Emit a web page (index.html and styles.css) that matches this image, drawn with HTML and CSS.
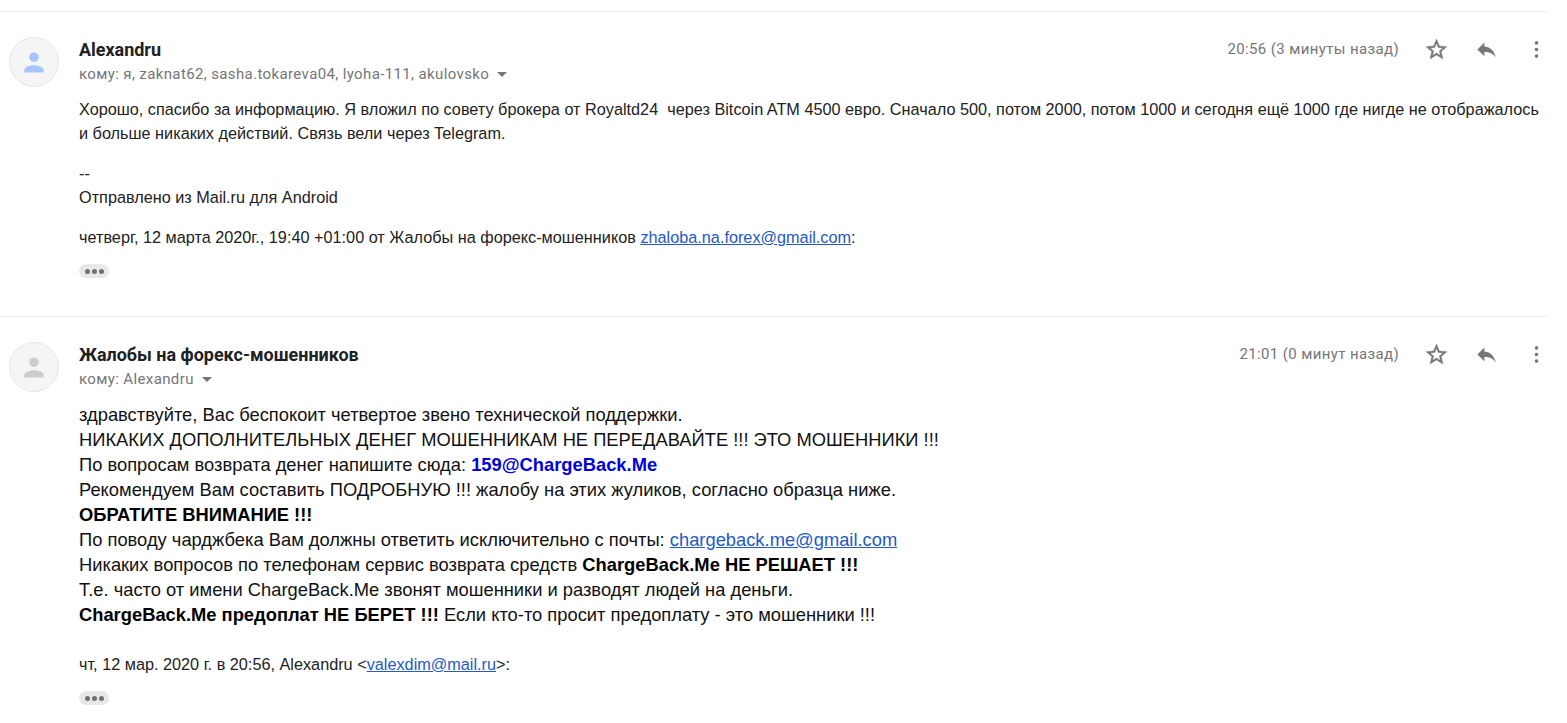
FILE: index.html
```
<!DOCTYPE html>
<html lang="ru">
<head>
<meta charset="utf-8">
<title>Переписка</title>
<link rel="stylesheet" href="styles.css">
</head>
<body>
<svg class="defs" width="0" height="0" aria-hidden="true">
  <symbol id="person" viewBox="0 0 50 50"><circle cx="25" cy="20" r="5"/><path d="M15 36v-2.2c0-3.8 6-5.3 10-5.3s10 1.500 10 5.300V36z"/></symbol>
  <symbol id="star" viewBox="0 0 24 24"><path stroke="currentColor" stroke-width=".4" d="M22 9.240l-7.190-.62L12 2 9.190 8.630 2 9.240l5.460 4.730L5.820 21 12 17.270 18.180 21l-1.630-7.030L22 9.240zM12 15.400l-3.760 2.270 1-4.280-3.320-2.880 4.380-.38L12 6.100l1.710 4.040 4.380.38-3.320 2.880 1 4.280L12 15.400z"/></symbol>
  <symbol id="reply" viewBox="0 0 24 24"><path d="M10 9V5.300L3.200 12l6.800 6.500v-4c4.800-.1 8 1.300 11 5-1.500-5.500-4.500-10-11-10.500z"/></symbol>
  <symbol id="more" viewBox="0 0 24 24"><circle cx="12" cy="5.700" r="1.750"/><circle cx="12" cy="12" r="1.750"/><circle cx="12" cy="18.300" r="1.750"/></symbol>
</svg>
<main class="thread">
  <article class="message">
    <div class="avatar blue"><svg><use href="#person"/></svg></div>
    <div class="content">
      <header class="head">
        <div>
          <h3 class="sender">Alexandru</h3>
          <div class="to"><span>кому: я, zaknat62, sasha.tokareva04, lyoha-111, akulovsko</span><i class="caret"></i></div>
        </div>
        <div class="tools"><time>20:56 (3 минуты назад)</time><svg><use href="#star"/></svg><svg class="reply"><use href="#reply"/></svg><svg class="more"><use href="#more"/></svg></div>
      </header>
      <div class="body">
        <p>Хорошо, спасибо за информацию. Я вложил по совету брокера от Royaltd24&nbsp; через Bitcoin ATM 4500 евро. Сначало 500, потом 2000, потом 1000 и сегодня ещё 1000 где нигде не отображалось<br>и больше никаких действий. Связь вели через Telegram.</p>
        <p class="signature">--<br>Отправлено из Mail.ru для Android</p>
        <p class="quote">четверг, 12 марта 2020г., 19:40 +01:00 от Жалобы на форекс-мошенников <a href="#">zhaloba.na.forex@gmail.com</a>:</p>
      </div>
      <div class="dots"><i></i><i></i><i></i></div>
    </div>
  </article>
  <article class="message">
    <div class="avatar"><svg><use href="#person"/></svg></div>
    <div class="content">
      <header class="head">
        <div>
          <h3 class="sender">Жалобы на форекс-мошенников</h3>
          <div class="to"><span>кому: Alexandru</span><i class="caret"></i></div>
        </div>
        <div class="tools"><time>21:01 (0 минут назад)</time><svg><use href="#star"/></svg><svg class="reply"><use href="#reply"/></svg><svg class="more"><use href="#more"/></svg></div>
      </header>
      <div class="body large">
        <div>здравствуйте, Вас беспокоит четвертое звено технической поддержки.</div>
        <div>НИКАКИХ ДОПОЛНИТЕЛЬНЫХ ДЕНЕГ МОШЕННИКАМ НЕ ПЕРЕДАВАЙТЕ !!! ЭТО МОШЕННИКИ !!!</div>
        <div>По вопросам возврата денег напишите сюда: <b class="address">159@ChargeBack.Me</b></div>
        <div>Рекомендуем Вам составить ПОДРОБНУЮ !!! жалобу на этих жуликов, согласно образца ниже.</div>
        <div><b>ОБРАТИТЕ ВНИМАНИЕ !!!</b></div>
        <div>По поводу чарджбека Вам должны ответить исключительно с почты: <a href="#">chargeback.me@gmail.com</a></div>
        <div>Никаких вопросов по телефонам сервис возврата средств <b>ChargeBack.Me НЕ РЕШАЕТ !!!</b></div>
        <div>Т.е. часто от имени ChargeBack.Me звонят мошенники и разводят людей на деньги.</div>
        <div><b>ChargeBack.Me предоплат НЕ БЕРЕТ !!!</b> Если кто-то просит предоплату - это мошенники !!!</div>
      </div>
      <p class="reply-quote">чт, 12 мар. 2020 г. в 20:56, Alexandru &lt;<a href="#">valexdim@mail.ru</a>&gt;:</p>
      <div class="dots"><i></i><i></i><i></i></div>
    </div>
  </article>
</main>
</body>
</html>
```
FILE: styles.css
```
* { box-sizing: border-box; }
body { margin: 0; background: #fff; color: #222; font: 16.25px/24px "Liberation Sans", Arial, sans-serif; overflow: hidden; }
p, h3 { margin: 0; }
a { color: #2459c6; }
.defs { display: block; height: 0; }
.thread { width: 1549px; padding-top: 11px; }
.message { display: flex; height: 305px; border-top: 1px solid #ededed; padding: 25px 0 0 9px; }
.message + .message { height: 407px; }
.avatar { flex: none; width: 50px; height: 50px; border: 1px solid #e6e6e6; border-radius: 50%; background: #f5f5f5; color: #ccc; }
.avatar svg { display: block; width: 48px; height: 48px; fill: currentColor; }
.avatar.blue { color: #a6c5fa; }
.content { flex: 1; min-width: 0; padding-left: 20px; }
.head { display: flex; justify-content: space-between; height: 49px; font-family: Roboto, sans-serif; }
.sender { font-size: 17.95px; line-height: 25px; font-weight: 700; color: #202124; }
.to { display: flex; align-items: center; font-size: 15px; line-height: 24px; letter-spacing: .375px; color: #747679; }
.caret { margin-left: 8px; border: 5px solid transparent; border-top-color: #747679; border-bottom: 0; }
.tools { display: flex; align-items: center; height: 25px; color: #747679; }
.tools time { font-size: 15px; letter-spacing: .375px; margin-right: 25px; padding-bottom: 2px; }
.tools svg { width: 25px; height: 25px; fill: #777; }
.tools .reply { margin-left: 25px; }
.tools .more { margin-left: 25px; }
.body { padding-top: 11px; white-space: nowrap; }
.signature { margin-top: 16px; }
.quote { margin-top: 16px; }
.dots { display: flex; width: 30px; height: 14px; margin-top: 15px; border-radius: 7px; background: #e8e8e8; align-items: center; justify-content: center; gap: 2px; }
.dots i { width: 5px; height: 5px; border-radius: 50%; background: #707070; }
.large { font-size: 18.333px; line-height: 25px; color: #111; }
.large b { color: #000; }
.large .address { color: #0000e0; }
.reply-quote { margin-top: 25px; }
```
